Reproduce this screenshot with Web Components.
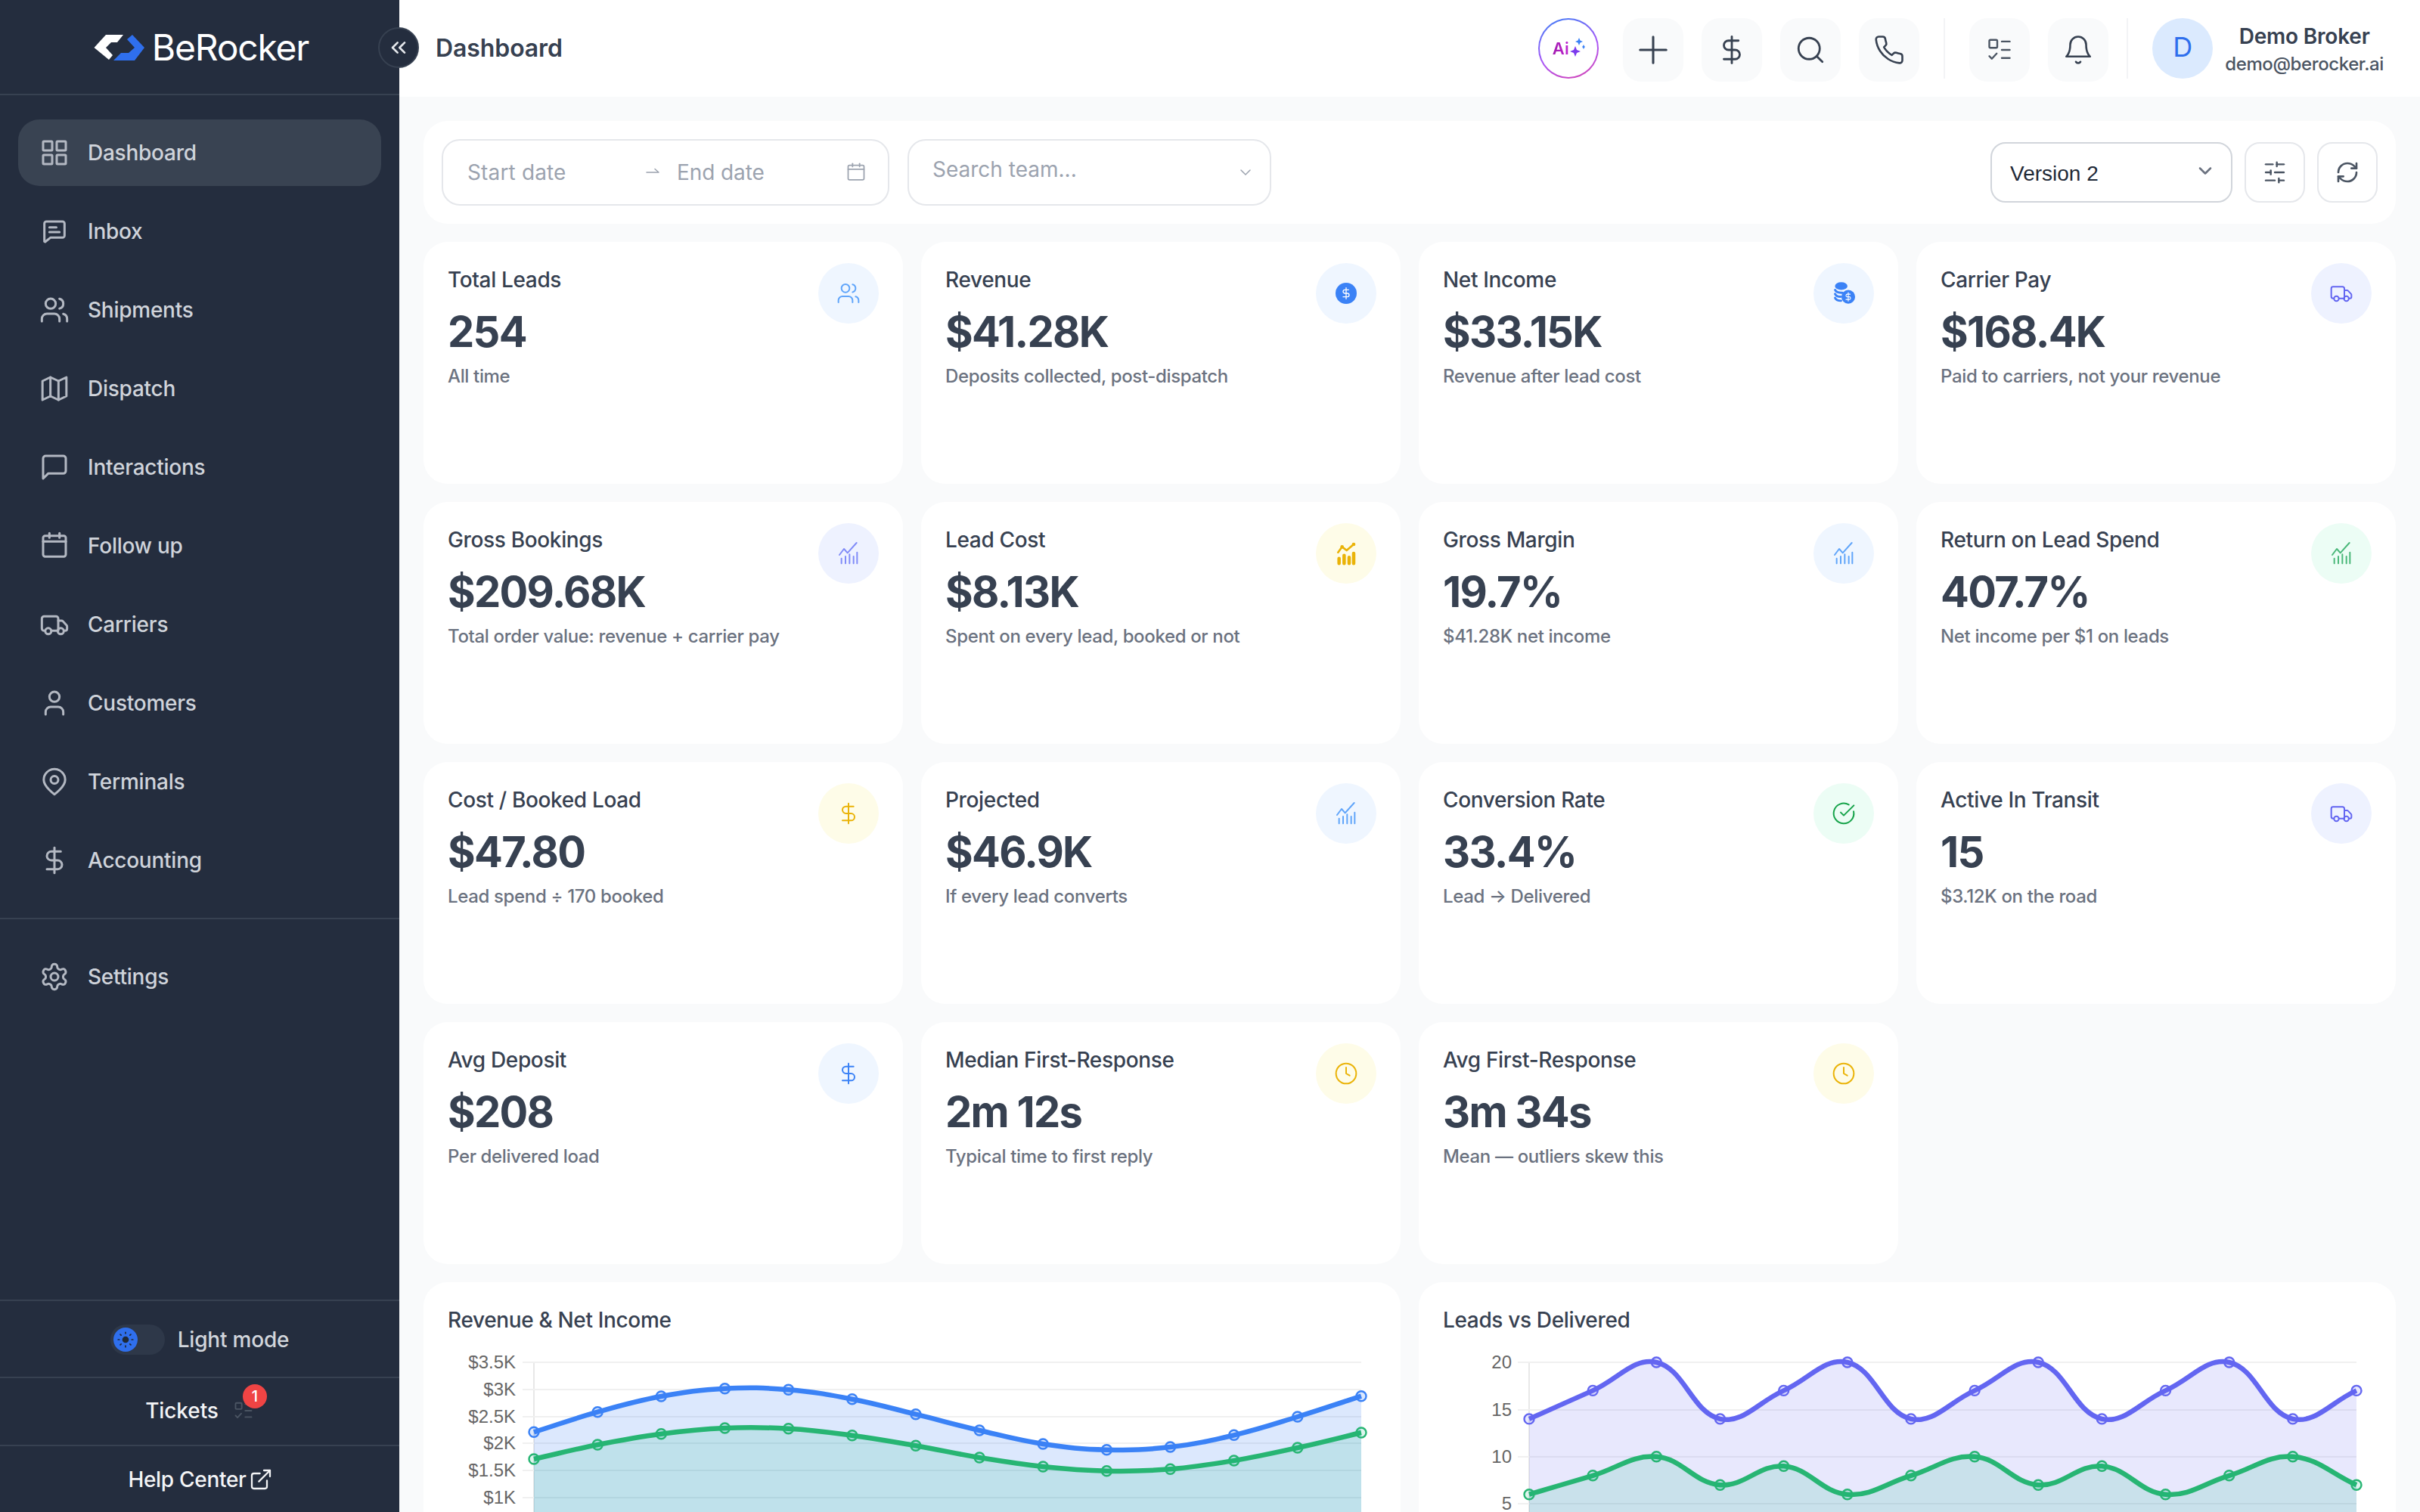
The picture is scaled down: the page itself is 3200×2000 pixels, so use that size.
<!DOCTYPE html>
<html lang="en">
<head>
<meta charset="utf-8">
<title>BeRocker Dashboard</title>
<style>
html,body{margin:0;padding:0;height:100%;overflow:hidden;background:#f9fafb;font-family:Inter,"Noto Sans",sans-serif;}
</style>
</head>
<body>
<x-app>
  <x-sidebar slot="sidebar">
    <x-nav-item icon="grid" active>Dashboard</x-nav-item>
    <x-nav-item icon="inbox">Inbox</x-nav-item>
    <x-nav-item icon="users">Shipments</x-nav-item>
    <x-nav-item icon="map">Dispatch</x-nav-item>
    <x-nav-item icon="message">Interactions</x-nav-item>
    <x-nav-item icon="calendar">Follow up</x-nav-item>
    <x-nav-item icon="truck">Carriers</x-nav-item>
    <x-nav-item icon="user">Customers</x-nav-item>
    <x-nav-item icon="pin">Terminals</x-nav-item>
    <x-nav-item icon="dollar">Accounting</x-nav-item>
    <x-nav-item icon="settings" slot="settings">Settings</x-nav-item>
  </x-sidebar>
  <x-topbar slot="topbar"></x-topbar>
  <x-filterbar slot="main"></x-filterbar>
  <x-stat-grid slot="main">
    <x-stat icon="users" tone="blue-l"><span slot="title">Total Leads</span><span slot="value">254</span><span slot="sub">All time</span></x-stat>
    <x-stat icon="coin" tone="blue-s"><span slot="title">Revenue</span><span slot="value">$41.28K</span><span slot="sub">Deposits collected, post-dispatch</span></x-stat>
    <x-stat icon="coins" tone="blue-s"><span slot="title">Net Income</span><span slot="value">$33.15K</span><span slot="sub">Revenue after lead cost</span></x-stat>
    <x-stat icon="truck" tone="indigo"><span slot="title">Carrier Pay</span><span slot="value">$168.4K</span><span slot="sub">Paid to carriers, not your revenue</span></x-stat>
    <x-stat icon="trend" tone="indigo-l"><span slot="title">Gross Bookings</span><span slot="value">$209.68K</span><span slot="sub">Total order value: revenue + carrier pay</span></x-stat>
    <x-stat icon="trendbold" tone="yellow"><span slot="title">Lead Cost</span><span slot="value">$8.13K</span><span slot="sub">Spent on every lead, booked or not</span></x-stat>
    <x-stat icon="trend" tone="blue-l"><span slot="title">Gross Margin</span><span slot="value">19.7%</span><span slot="sub">$41.28K net income</span></x-stat>
    <x-stat icon="trend" tone="green-l"><span slot="title">Return on Lead Spend</span><span slot="value">407.7%</span><span slot="sub">Net income per $1 on leads</span></x-stat>
    <x-stat icon="dollar" tone="yellow"><span slot="title">Cost / Booked Load</span><span slot="value">$47.80</span><span slot="sub">Lead spend ÷ 170 booked</span></x-stat>
    <x-stat icon="trend" tone="blue-l"><span slot="title">Projected</span><span slot="value">$46.9K</span><span slot="sub">If every lead converts</span></x-stat>
    <x-stat icon="check" tone="green"><span slot="title">Conversion Rate</span><span slot="value">33.4%</span><span slot="sub">Lead → Delivered</span></x-stat>
    <x-stat icon="truck" tone="indigo"><span slot="title">Active In Transit</span><span slot="value">15</span><span slot="sub">$3.12K on the road</span></x-stat>
    <x-stat icon="dollar" tone="blue-s"><span slot="title">Avg Deposit</span><span slot="value">$208</span><span slot="sub">Per delivered load</span></x-stat>
    <x-stat icon="clock" tone="yellow"><span slot="title">Median First-Response</span><span slot="value">2m 12s</span><span slot="sub">Typical time to first reply</span></x-stat>
    <x-stat icon="clock" tone="yellow"><span slot="title">Avg First-Response</span><span slot="value">3m 34s</span><span slot="sub">Mean — outliers skew this</span></x-stat>
  </x-stat-grid>
  <x-chart-row slot="main">
    <x-chart heading="Revenue &amp; Net Income" kind="money"></x-chart>
    <x-chart heading="Leads vs Delivered" kind="count"></x-chart>
  </x-chart-row>
</x-app>
<script>
const ICONS = {
  grid:'<rect x="3" y="3" width="7.2" height="7.2" rx=".6"/><rect x="13.8" y="3" width="7.2" height="7.2" rx=".6"/><rect x="3" y="13.8" width="7.2" height="7.2" rx=".6"/><rect x="13.8" y="13.8" width="7.2" height="7.2" rx=".6"/>',
  inbox:'<path d="M5.6 4.2h12.8A1.6 1.6 0 0 1 20 5.8v9.6a1.6 1.6 0 0 1-1.6 1.6H8.8L4.6 20.4l-.6-.3V5.8a1.6 1.6 0 0 1 1.6-1.6z"/><path d="M8 8.8h5.5M8 12.6h8"/>',
  users:'<path d="M16 21v-2a4 4 0 0 0-4-4H6a4 4 0 0 0-4 4v2"/><circle cx="9" cy="7" r="4"/><path d="M22 21v-2a4 4 0 0 0-3-3.87"/><path d="M16 3.13a4 4 0 0 1 0 7.75"/>',
  map:'<polygon points="2.5 6 8.8 3 15.2 6 21.5 3 21.5 18 15.2 21 8.8 18 2.5 21"/><line x1="8.8" x2="8.8" y1="3" y2="18"/><line x1="15.2" x2="15.2" y1="6" y2="21"/>',
  message:'<path d="M21 15a2 2 0 0 1-2 2H7l-4 4V5a2 2 0 0 1 2-2h14a2 2 0 0 1 2 2z"/>',
  calendar:'<rect x="3" y="4" width="18" height="16.5" rx="1.6"/><line x1="16" x2="16" y1="2" y2="5.5"/><line x1="8" x2="8" y1="2" y2="5.5"/><line x1="3" x2="21" y1="8.5" y2="8.5"/>',
  truck:'<path d="M4.6 17H3.8A1.8 1.8 0 0 1 2 15.2V7.3a1.8 1.8 0 0 1 1.8-1.8h9.4A1.8 1.8 0 0 1 15 7.3V17h-5.4"/><path d="M15 9h2.6a1.5 1.5 0 0 1 1.1.5l3 3.2a1.4 1.4 0 0 1 .3.9v1.9a1.5 1.5 0 0 1-1.5 1.5h-1.1"/><path d="M14.4 17h.2"/><circle cx="7.1" cy="17.3" r="2.4"/><circle cx="17" cy="17.3" r="2.4"/>',
  user:'<path d="M19 21v-2a4 4 0 0 0-4-4H9a4 4 0 0 0-4 4v2"/><circle cx="12" cy="7" r="4"/>',
  pin:'<path d="M20.5 10.5c0 5.5-8.5 11.5-8.5 11.5s-8.5-6-8.5-11.5a8.5 8.5 0 0 1 17 0Z"/><circle cx="12" cy="10.5" r="3"/>',
  dollar:'<line x1="12" x2="12" y1="2" y2="22"/><path d="M17 5H9.5a3.5 3.5 0 0 0 0 7h5a3.5 3.5 0 0 1 0 7H6"/>',
  settings:'<path d="M12.22 2h-.44a2 2 0 0 0-2 2v.18a2 2 0 0 1-1 1.73l-.43.25a2 2 0 0 1-2 0l-.15-.08a2 2 0 0 0-2.73.73l-.22.38a2 2 0 0 0 .73 2.73l.15.1a2 2 0 0 1 1 1.72v.51a2 2 0 0 1-1 1.74l-.15.09a2 2 0 0 0-.73 2.73l.22.38a2 2 0 0 0 2.73.73l.15-.08a2 2 0 0 1 2 0l.43.25a2 2 0 0 1 1 1.73V20a2 2 0 0 0 2 2h.44a2 2 0 0 0 2-2v-.18a2 2 0 0 1 1-1.73l.43-.25a2 2 0 0 1 2 0l.15.08a2 2 0 0 0 2.73-.73l.22-.39a2 2 0 0 0-.73-2.73l-.15-.08a2 2 0 0 1-1-1.74v-.5a2 2 0 0 1 1-1.74l.15-.09a2 2 0 0 0 .73-2.73l-.22-.38a2 2 0 0 0-2.73-.73l-.15.08a2 2 0 0 1-2 0l-.43-.25a2 2 0 0 1-1-1.73V4a2 2 0 0 0-2-2z"/><circle cx="12" cy="12" r="3"/>',
  plus:'<path d="M3 12h18M12 3v18"/>',
  search:'<circle cx="11" cy="11" r="8"/><line x1="21" y1="21" x2="16.65" y2="16.65"/>',
  phone:'<path d="M22 16.92v3a2 2 0 0 1-2.18 2 19.79 19.79 0 0 1-8.63-3.07 19.5 19.5 0 0 1-6-6 19.79 19.79 0 0 1-3.07-8.67A2 2 0 0 1 4.11 2h3a2 2 0 0 1 2 1.72 12.84 12.84 0 0 0 .7 2.81 2 2 0 0 1-.45 2.11L8.09 9.91a16 16 0 0 0 6 6l1.27-1.27a2 2 0 0 1 2.11-.45 12.84 12.84 0 0 0 2.81.7A2 2 0 0 1 22 16.92z"/>',
  bell:'<path d="M6 8a6 6 0 0 1 12 0c0 7 3 9 3 9H3s3-2 3-9"/><path d="M10.3 21a1.94 1.94 0 0 0 3.4 0"/>',
  tasks:'<rect x="3" y="3.2" width="7" height="7" rx="1"/><path d="M14 4.6h7M14 12h7M14 19.2h7"/><path d="m3 17.5 2.2 2.3 4.3-4.6"/>',
  sliders:'<line x1="21" x2="14" y1="4" y2="4"/><line x1="10" x2="3" y1="4" y2="4"/><line x1="21" x2="12" y1="12" y2="12"/><line x1="8" x2="3" y1="12" y2="12"/><line x1="21" x2="16" y1="20" y2="20"/><line x1="12" x2="3" y1="20" y2="20"/><line x1="14" x2="14" y1="2" y2="6"/><line x1="8" x2="8" y1="10" y2="14"/><line x1="16" x2="16" y1="18" y2="22"/>',
  refresh:'<path d="M3 12a9 9 0 0 1 9-9 9.75 9.75 0 0 1 6.74 2.74L21 8"/><path d="M21 3v5h-5"/><path d="M21 12a9 9 0 0 1-9 9 9.75 9.75 0 0 1-6.74-2.74L3 16"/><path d="M8 16H3v5"/>',
  external:'<path d="M15 3h6v6"/><path d="M10 14 21 3"/><path d="M18 13v6a2 2 0 0 1-2 2H5a2 2 0 0 1-2-2V8a2 2 0 0 1 2-2h6"/>',
  check:'<path d="M21.8 10A10 10 0 1 1 17 3.3"/><path d="m9 11 3 3L22 4"/>',
  clock:'<circle cx="12" cy="12" r="10"/><polyline points="12 6 12 12 15.5 14"/>',
  trend:'<path d="M3 13.5 7.5 7.5 11 11.5 20 1.5"/><path d="M5 22v-5M9 22v-7M13 22v-9M17 22v-7M20.5 22v-11"/>',
  trendbold:'<path d="M4 11 8 5.5 12.5 9 19.5 3" stroke-width="2"/><circle cx="8" cy="5.5" r="1" fill="currentColor"/><circle cx="19.5" cy="3" r="1" fill="currentColor"/><path d="M5 22v-5M10 22v-8M15 22v-6M19.5 22v-10" stroke-width="3.4"/>',
  coin:'<circle cx="12" cy="12" r="10.5" fill="currentColor" stroke="none"/><g stroke="#fff" stroke-width="2" transform="translate(6 6) scale(.5)"><line x1="12" x2="12" y1="1" y2="23"/><path d="M17 5H9.5a3.5 3.5 0 0 0 0 7h5a3.5 3.5 0 0 1 0 7H6"/></g>',
  coins:'<ellipse cx="9.5" cy="4.8" rx="6.2" ry="3.8" fill="currentColor" stroke="none"/><path d="M3.4 8.6c1 2.2 4 3 7 2.8M3.4 12.6c1 2 3.4 2.8 5.6 2.8M3.4 16.6c1 2 3.4 2.8 6 2.8" stroke-width="2.2"/><circle cx="16.5" cy="15.5" r="6.8" fill="currentColor" stroke="none"/><g stroke="#fff" stroke-width="2.2" transform="translate(12 11) scale(.375)"><line x1="12" x2="12" y1="1" y2="23"/><path d="M17 5H9.5a3.5 3.5 0 0 0 0 7h5a3.5 3.5 0 0 1 0 7H6"/></g>',
  chevsleft:'<path d="m11 17-5-5 5-5"/><path d="m18 17-5-5 5-5"/>',
  chevron:'<path d="m6 9 6 6 6-6"/>',
  arrow:'<path d="M4 12h16M15 7.5l5 4.5"/>',
  sun:'<circle cx="12" cy="12" r="4" fill="currentColor" stroke="none"/><path d="M12 3v1.4M12 19.6V21M3 12h1.4M19.6 12H21M5.6 5.6l1 1M17.4 17.4l1 1M5.6 18.4l1-1M17.4 6.6l1-1"/>'
};
function def(name, css, html, init){
  customElements.define(name, class extends HTMLElement{
    constructor(){super();const r=this.attachShadow({mode:'open'});r.innerHTML='<style>'+css+'</style>'+html;}
    connectedCallback(){ if(init&&!this._d){this._d=1;init.call(this,this.shadowRoot);} }
  });
}
function ico(name,size,color,sw){
  return `<x-icon name="${name}" size="${size}"${color?` color="${color}"`:''}${sw?` sw="${sw}"`:''}></x-icon>`;
}
customElements.define('x-icon', class extends HTMLElement{
  constructor(){super();this.attachShadow({mode:'open'});}
  connectedCallback(){
    const s=this.getAttribute('size')||40,c=this.getAttribute('color')||'currentColor',w=this.getAttribute('sw')||'1.5';
    this.shadowRoot.innerHTML=`<style>:host{display:inline-flex;flex:none;width:${s}px;height:${s}px;color:${c}}svg{display:block;width:100%;height:100%}</style><svg viewBox="0 0 24 24" fill="none" stroke="currentColor" stroke-width="${w}" stroke-linecap="round" stroke-linejoin="round">${ICONS[this.getAttribute('name')]||''}</svg>`;
  }
});

def('x-app',`
  :host{display:grid;grid-template-columns:528px 1fr;height:2000px;width:3200px;overflow:hidden}
  .main{min-width:0;display:flex;flex-direction:column;height:2000px}
  .content{display:flex;flex-direction:column;gap:24px;padding:32px 32px 0;overflow:hidden;flex:1;min-height:0}
`,`<slot name="sidebar"></slot><div class="main"><slot name="topbar"></slot><div class="content"><slot name="main"></slot></div></div>`);

def('x-logo',`
  :host{display:flex;align-items:center;justify-content:center;gap:9px;height:122px;padding-top:2px;border-bottom:2px solid #374151;color:#fff;padding-left:4px}
  svg{width:68px;height:36px;display:block;margin-top:-1px}
  span{font-size:48px;font-weight:400;letter-spacing:-1.2px;line-height:1}
`,`<svg viewBox="0 0 68 36"><path fill="#fff" d="M0.5 18 16 1H39L31 11H23L16 18 25 28 20 34Z"/><path fill="#2f6fed" d="M51 1 67 18 54 35H26L36 25H46L54 18 44 7Z"/></svg><span>BeRocker</span>`);

def('x-sidebar',`
  :host{display:flex;flex-direction:column;background:#242d3e;height:2000px;color:#d1d5db}
  nav{display:flex;flex-direction:column;gap:16px;padding:32px 24px}
  .sep{border-top:2px solid #374151}
  .foot{margin-top:auto}
  .row{display:flex;align-items:center;justify-content:center;border-top:2px solid #374151;box-sizing:border-box;font-size:28px;font-weight:500}
  .mode{height:102px;gap:17px;color:#d1d5db;letter-spacing:-.2px;padding-top:1px}
  .tog{width:72px;height:40px;border-radius:20px;background:#2e3849;display:flex;align-items:center;padding-left:4px;box-sizing:border-box}
  .thumb{width:32px;height:32px;border-radius:50%;background:#2f6fed;display:flex;align-items:center;justify-content:center}
  .tick{height:90px;color:#f3f4f6;gap:19px;letter-spacing:-.1px;padding-bottom:2px}
  .tk{position:relative;display:flex;opacity:1}
  .badge{position:absolute;left:13px;top:-21px;width:32px;height:32px;border-radius:50%;background:#ef4444;color:#fff;font-size:20px;font-weight:500;display:flex;align-items:center;justify-content:center}
  .help{height:89px;color:#f3f4f6;gap:3px;padding-left:2px;letter-spacing:-.3px}
`,`<x-logo></x-logo><nav><slot></slot></nav><div class="sep"></div><nav><slot name="settings"></slot></nav>
<div class="foot">
 <div class="row mode"><div class="tog"><div class="thumb">${ico('sun',26,'#1f2937','1.6')}</div></div><span>Light mode</span></div>
 <div class="row tick"><span>Tickets</span><span class="tk">${ico('tasks',28,'#4b5563','1.6')}<span class="badge">1</span></span></div>
 <div class="row help"><span>Help Center</span>${ico('external',32,'#f3f4f6','1.7')}</div>
</div>`);

customElements.define('x-nav-item', class extends HTMLElement{
  constructor(){super();this.attachShadow({mode:'open'});}
  connectedCallback(){
    this.shadowRoot.innerHTML=`<style>
      :host{display:flex;align-items:center;gap:24px;height:88px;padding-left:28px;border-radius:28px;font-size:28px;font-weight:500;color:#cfd3da;letter-spacing:-.25px}
      :host([active]){background:#394352}
      x-icon{color:#b3b8c2}
    </style>${ico(this.getAttribute('icon'),40,null,'1.8')}<span><slot></slot></span>`;
  }
});

def('x-icon-btn',`
  :host{display:flex;align-items:center;justify-content:center;width:80px;height:84px;border-radius:24px;background:#f9fafb;flex:none;color:#374151}
`,`<slot></slot>`);

def('x-topbar',`
  :host{display:flex;align-items:flex-start;height:128px;background:#fff;position:relative;padding:24px 48px 0;box-sizing:border-box;flex:none}
  .collapse{position:absolute;left:-28px;top:36px;width:54px;height:54px;border-radius:50%;background:#242d3e;border:2px solid #374151;box-sizing:border-box;display:flex;align-items:center;justify-content:center;color:#e5e7eb;z-index:2}
  h1{margin:0;font-size:32px;font-weight:600;color:#374151;line-height:80px;letter-spacing:-.1px}
  .right{margin-left:auto;display:flex;align-items:flex-start}
  .ai{width:80px;height:80px;border-radius:50%;padding:2px;box-sizing:border-box;background:linear-gradient(160deg,#3b82f6,#a855f7 55%,#d946b0);margin-right:32px;flex:none}
  .ai>div{width:100%;height:100%;border-radius:50%;background:#fff;display:flex;align-items:center;justify-content:center;gap:1px}
  .ai b{font-size:22px;font-weight:600;background:linear-gradient(90deg,#a21caf,#c026d3);-webkit-background-clip:text;background-clip:text;color:transparent}
  .ai svg{width:20px;height:26px;margin-top:-3px}
  .gap{display:flex;gap:24px}
  .div{width:2px;height:80px;background:#f3f4f6;flex:none}
  .user{display:flex;align-items:flex-start;gap:16px}
  .av{width:80px;height:80px;border-radius:50%;background:#dbeafe;color:#2f6fed;font-size:36px;display:flex;align-items:center;justify-content:center;flex:none;padding-bottom:4px;box-sizing:border-box}
  .txt{display:flex;flex-direction:column;align-items:center;padding-top:4px}
  .n{font-size:28px;font-weight:600;color:#374151;line-height:40px;letter-spacing:-.2px}
  .e{font-size:24px;font-weight:500;color:#4b5563;line-height:34px;letter-spacing:-.4px}
`,`<div class="collapse">${ico('chevsleft',32,null,'2')}</div><h1>Dashboard</h1>
<div class="right">
 <div class="ai"><div><b>Ai</b><svg viewBox="0 0 20 26"><path fill="#3b82f6" d="M12 0l1.5 3.5L17 5l-3.5 1.5L12 10l-1.5-3.5L7 5l3.5-1.5zM18 9l1 2 1 1-1 1-1 2-1-2-1-1 1-1z"/><path fill="#7c3aed" d="M7 11l2 5 5 2-5 2-2 5-2-5-5-2 5-2z"/></svg></div></div>
 <div class="gap">
  <x-icon-btn>${ico('plus',46,'#374151','1.6')}</x-icon-btn>
  <x-icon-btn>${ico('dollar',42,'#374151','1.6')}</x-icon-btn>
  <x-icon-btn>${ico('search',42,'#374151','1.6')}</x-icon-btn>
  <x-icon-btn>${ico('phone',42,'#374151','1.5')}</x-icon-btn>
 </div>
 <div class="div" style="margin:0 32px"></div>
 <div class="gap">
  <x-icon-btn>${ico('tasks',36,'#4b5563','1.6')}</x-icon-btn>
  <x-icon-btn>${ico('bell',42,'#374151','1.5')}</x-icon-btn>
 </div>
 <div class="div" style="margin:0 32px 0 24px"></div>
 <div class="user"><div class="av">D</div><div class="txt"><div class="n">Demo Broker</div><div class="e">demo@berocker.ai</div></div></div>
</div>`);

def('x-filterbar',`
  :host{display:flex;align-items:center;gap:24px;height:136px;background:#fff;border-radius:32px;padding:0 24px;box-sizing:border-box;flex:none}
  .field{height:88px;border:2px solid #e5e7eb;border-radius:24px;box-sizing:border-box;display:flex;align-items:center;font-size:28px;color:#9ca3af}
  .date{width:592px;padding:0 28px 0 32px;letter-spacing:.15px}
  .date .a{width:136px}
  .date x-icon:first-of-type{margin-left:97px}
  .date .b{margin-left:20px;letter-spacing:-.1px}
  .date x-icon:last-of-type{margin-left:auto;margin-right:0}
  .team{width:481px;padding:0 20px 8px 31px}
  .team x-icon{margin:8px 0 0 auto}
  .right{margin-left:auto;display:flex;gap:16px}
  .sel{width:320px;height:80px;border:2px solid #d1d5db;border-radius:20px;box-sizing:border-box;display:flex;align-items:center;padding:0 20px 0 24px;font:28px "Liberation Sans",Arial,sans-serif;color:#1f2937;gap:0}
  .sel x-icon{margin:-4px 0 0 auto}
  .btn{width:80px;height:80px;border:2px solid #e5e7eb;border-radius:20px;box-sizing:border-box;display:flex;align-items:center;justify-content:center;color:#4b5563}
  .sel span{padding-top:4px}
`,`<div class="field date"><span class="a">Start date</span>${ico('arrow',24,'#9ca3af','1.5')}<span class="b">End date</span>${ico('calendar',28,'#9ca3af','1.5')}</div>
<div class="field team"><span>Search team...</span>${ico('chevron',24,'#9ca3af','1.5')}</div>
<div class="right"><div class="sel"><span>Version 2</span>${ico('chevron',28,'#6b7280','2.2')}</div>
<div class="btn">${ico('sliders',32,null,'1.8')}</div><div class="btn">${ico('refresh',32,null,'2')}</div></div>`);

def('x-stat-grid',`
  :host{display:grid;grid-template-columns:repeat(4,1fr);grid-auto-rows:320px;gap:24px;flex:none}
`,`<slot></slot>`);

const TONES={'blue-l':['#eff6ff','#60a5fa'],'blue-s':['#eff6ff','#3b82f6'],indigo:['#eef2ff','#6366f1'],'indigo-l':['#eef2ff','#818cf8'],yellow:['#fefce8','#eab308'],'green-l':['#ecfdf5','#4bb87a'],green:['#ecfdf5','#16a34a']};
customElements.define('x-stat', class extends HTMLElement{
  constructor(){super();this.attachShadow({mode:'open'});}
  connectedCallback(){
    const t=TONES[this.getAttribute('tone')];
    this.shadowRoot.innerHTML=`<style>
      :host{display:flex;justify-content:space-between;align-items:flex-start;background:#fff;border-radius:32px;padding:30px 32px;box-sizing:border-box}
      .t{font-size:28px;font-weight:450;line-height:40px;color:#374151;letter-spacing:-.35px}
      .v{font-size:56px;font-weight:700;line-height:64px;color:#374151;margin-top:17px;letter-spacing:-1.7px}
      .s{font-size:24px;font-weight:450;line-height:32px;color:#6b7280;margin-top:11px;letter-spacing:-.35px}
      .c{width:80px;height:80px;border-radius:50%;background:${t[0]};display:flex;align-items:center;justify-content:center;flex:none;margin-top:-2px}
    </style><div><div class="t"><slot name="title"></slot></div><div class="v"><slot name="value"></slot></div><div class="s"><slot name="sub"></slot></div></div>
    <div class="c">${ico(this.getAttribute('icon'),32,t[1],'1.5')}</div>`;
  }
});

def('x-chart-row',`:host{display:grid;grid-template-columns:1fr 1fr;gap:24px;flex:none}`,`<slot></slot>`);

const CHARTS={
  money:{x0:146,xn:1240,gridFrom:131,labelX:122,
    grid:[['$3.5K',106],['$3K',142],['$2.5K',178],['$2K',213],['$1.5K',249],['$1K',285]],
    series:[
      {c:'#3b82f6',f:'rgba(59,130,246,.18)',y:[643,563,501,470,475,512,572,636,690,713,702,655,582,500].map(v=>v/3-16)},
      {c:'#27b573',f:'rgba(16,185,129,.14)',y:[750,693,650,627,629,656,697,744,780,797,790,756,705,645].map(v=>v/3-16)}
    ]},
  count:{x0:146,xn:1240,gridFrom:131,labelX:123,
    grid:[['20',106],['15',169],['10',231],['5',293]],
    series:[
      {c:'#6366f1',f:'rgba(99,102,241,.15)',y:[14,17,20,14,17,20,14,17,20,14,17,20,14,17].map(v=>106+(20-v)*12.48)},
      {c:'#27b573',f:'rgba(16,185,129,.14)',y:[6,8,10,7,9,6,8,10,7,9,6,8,10,7].map(v=>106+(20-v)*12.48)}
    ]}
};
function spline(pts,t){
  let d=`M${pts[0][0]} ${pts[0][1]}`;
  const cp=pts.map((p,i)=>{
    const a=pts[i-1]||p,b=pts[i+1]||p;
    const d1=Math.hypot(p[0]-a[0],p[1]-a[1]),d2=Math.hypot(b[0]-p[0],b[1]-p[1]);
    const s=d1+d2||1,fa=t*d1/s,fb=t*d2/s;
    return [[p[0]-fa*(b[0]-a[0]),p[1]-fa*(b[1]-a[1])],[p[0]+fb*(b[0]-a[0]),p[1]+fb*(b[1]-a[1])]];
  });
  for(let i=1;i<pts.length;i++){d+=`C${cp[i-1][1][0].toFixed(1)} ${cp[i-1][1][1].toFixed(1)} ${cp[i][0][0].toFixed(1)} ${cp[i][0][1].toFixed(1)} ${pts[i][0]} ${pts[i][1]}`;}
  return d;
}
customElements.define('x-chart', class extends HTMLElement{
  constructor(){super();this.attachShadow({mode:'open'});}
  connectedCallback(){
    const k=CHARTS[this.getAttribute('kind')],H=460;
    const step=(k.xn-k.x0)/13;
    let g='';
    g+=`<line x1="${k.x0}" x2="${k.x0}" y1="106" y2="${H}" stroke="#e8e8e8" stroke-width="2"/>`;
    k.grid.forEach(([l,y])=>{
      g+=`<line x1="${k.gridFrom}" x2="${k.xn}" y1="${y}" y2="${y}" stroke="#f0f0f0" stroke-width="2"/>`;
      g+=`<text x="${k.labelX}" y="${y+8}" text-anchor="end" font-family="Liberation Sans, Arial, sans-serif" font-size="24" fill="#666">${l}</text>`;
    });
    k.series.forEach(s=>{
      const pts=s.y.map((y,i)=>[+(k.x0+i*step).toFixed(1),+y.toFixed(1)]);
      const d=spline(pts,.4);
      g+=`<path d="${d}L${k.xn} ${H}L${k.x0} ${H}Z" fill="${s.f}"/>`;
      s._p=pts;s._d=d;
    });
    k.series.forEach(s=>{
      g+=`<path d="${s._d}" fill="none" stroke="${s.c}" stroke-width="6.5"/>`;
      s._p.forEach(p=>{g+=`<circle cx="${p[0]}" cy="${p[1]}" r="6.5" fill="${s.f}" stroke="${s.c}" stroke-width="2.4"/>`;});
    });
    this.shadowRoot.innerHTML=`<style>
      :host{display:block;background:#fff;border-radius:32px;height:460px;overflow:hidden;position:relative}
      h3{margin:0;padding:30px 32px 0;font-size:28px;font-weight:450;line-height:40px;color:#374151;letter-spacing:-.35px;position:relative}
      svg{position:absolute;left:0;top:0;width:100%;height:460px;overflow:visible}
    </style><svg viewBox="0 0 1292 460" preserveAspectRatio="xMinYMin">${g}</svg><h3>${this.getAttribute('heading').replace('&','&amp;')}</h3>`;
  }
});
</script>
</body>
</html>
